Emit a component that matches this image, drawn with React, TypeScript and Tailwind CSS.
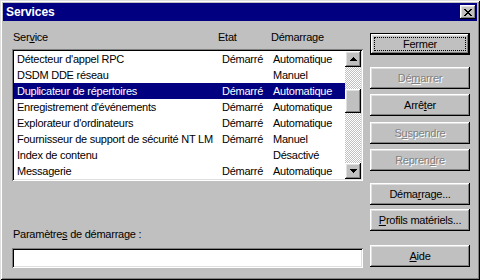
import React from 'react';

const raised =
  'shadow-[inset_-1px_-1px_0_#000,inset_1px_1px_0_#fff,inset_-2px_-2px_0_#808080,inset_2px_2px_0_#dfdfdf]';
const sunken =
  'shadow-[inset_1px_1px_0_#808080,inset_-1px_-1px_0_#fff,inset_2px_2px_0_#000,inset_-2px_-2px_0_#dfdfdf]';

const rows: [string, string, string][] = [
  ["Détecteur d'appel RPC", 'Démarré', 'Automatique'],
  ['DSDM DDE réseau', '', 'Manuel'],
  ['Duplicateur de répertoires', 'Démarré', 'Automatique'],
  ["Enregistrement d'événements", 'Démarré', 'Automatique'],
  ["Explorateur d'ordinateurs", 'Démarré', 'Automatique'],
  ['Fournisseur de support de sécurité NT LM', 'Démarré', 'Manuel'],
  ['Index de contenu', '', 'Désactivé'],
  ['Messagerie', 'Démarré', 'Automatique'],
];

const Arrow = ({ down }: { down?: boolean }) => (
  <svg width="7" height="4" viewBox="0 0 7 4" shapeRendering="crispEdges">
    <polygon points={down ? '0,0 7,0 3.5,4' : '0,4 7,4 3.5,0'} fill="#000" />
  </svg>
);

interface BtnProps {
  pre: string;
  key1?: string;
  post?: string;
  disabled?: boolean;
  className?: string;
}

const Btn: React.FC<BtnProps> = ({ pre, key1, post, disabled, className }) => (
  <div
    className={`h-[22px] w-[100px] flex items-center justify-center bg-[#c0c0c0] ${raised} ${className ?? ''} ${
      disabled ? 'text-[#808080] [text-shadow:1px_1px_0_#fff]' : 'text-black'
    }`}
  >
    <span>
      {pre}
      {key1 && <u>{key1}</u>}
      {post}
    </span>
  </div>
);

export default function App() {
  return (
    <div
      className="w-[480px] h-[280px] bg-[#c0c0c0] p-[3px] flex flex-col text-[11px] tracking-[-0.25px] leading-[13px] text-black shadow-[inset_1px_1px_0_#dfdfdf,inset_-1px_-1px_0_#000,inset_2px_2px_0_#fff,inset_-2px_-2px_0_#808080]"
      style={{ fontFamily: '"Liberation Sans", Arial, sans-serif' }}
    >
      {/* title bar */}
      <div className="h-[18px] bg-[#000080] flex items-center justify-between pl-[3px] pr-[1px]">
        <span className="text-white font-bold text-[12px] tracking-[-0.1px]">Services</span>
        <div className={`w-[16px] h-[14px] bg-[#c0c0c0] flex items-center justify-center ${raised}`}>
          <svg width="8" height="7" viewBox="0 0 8 7" shapeRendering="crispEdges">
            <path d="M0 0h2l2 2.3 2-2.3h2l-3 3.5 3 3.5h-2l-2-2.3-2 2.3h-2l3-3.5z" fill="#000" />
          </svg>
        </div>
      </div>

      <div className="flex flex-1">
        {/* left column */}
        <div className="ml-[9px] w-[351px] flex flex-col pt-[10px]">
          <div className="h-[18px] flex pl-[1px]">
            <span className="w-[205px]">
              Ser<u>v</u>ice
            </span>
            <span className="w-[53px]">Etat</span>
            <span>Démarrage</span>
          </div>

          <div className={`h-[132px] bg-white p-[2px] flex ${sunken}`}>
            <div className="flex-1 flex flex-col">
              {rows.map(([name, etat, dem], i) => (
                <div
                  key={name}
                  className={`h-[16px] flex items-center pl-[3px] whitespace-nowrap ${
                    i === 2 ? 'bg-[#000080] text-white' : ''
                  }`}
                >
                  <span className="w-[205px]">{name}</span>
                  <span className="w-[51px]">{etat}</span>
                  <span>{dem}</span>
                </div>
              ))}
            </div>
            <div className="w-[16px] flex flex-col">
              <div className={`h-[16px] bg-[#c0c0c0] flex items-center justify-center ${raised}`}>
                <Arrow />
              </div>
              <div className="flex-1 bg-[repeating-conic-gradient(#c0c0c0_0_25%,#fff_0_50%)] bg-[length:2px_2px]">
                <div className={`mt-[22px] h-[24px] bg-[#c0c0c0] ${raised}`} />
              </div>
              <div className={`h-[16px] bg-[#c0c0c0] flex items-center justify-center ${raised}`}>
                <Arrow down />
              </div>
            </div>
          </div>

          <div className="mt-[47px] pl-[1px]">
            Paramètre<u>s</u> de démarrage :
          </div>
          <div className={`mt-[7px] h-[20px] bg-white ${sunken}`} />
        </div>

        {/* right column */}
        <div className="ml-[7px] flex flex-col pt-[12px]">
          <div className="h-[22px] w-[100px] border border-black">
            <div className={`h-full w-full bg-[#c0c0c0] p-[3px] ${raised}`}>
              <div className="h-full w-full border border-dotted border-black flex items-center justify-center">
                Fermer
              </div>
            </div>
          </div>
          <Btn className="mt-[12px]" pre="Dé" key1="m" post="arrer" disabled />
          <Btn className="mt-[5px]" pre="Arrê" key1="t" post="er" />
          <Btn className="mt-[6px]" pre="S" key1="u" post="spendre" disabled />
          <Btn className="mt-[5px]" pre="Repren" key1="d" post="re" disabled />
          <Btn className="mt-[12px]" pre="Déma" key1="r" post="rage..." />
          <Btn className="mt-[4px]" pre="" key1="P" post="rofils matériels..." />
          <Btn className="mt-[14px]" pre="" key1="A" post="ide" />
        </div>
      </div>
    </div>
  );
}
